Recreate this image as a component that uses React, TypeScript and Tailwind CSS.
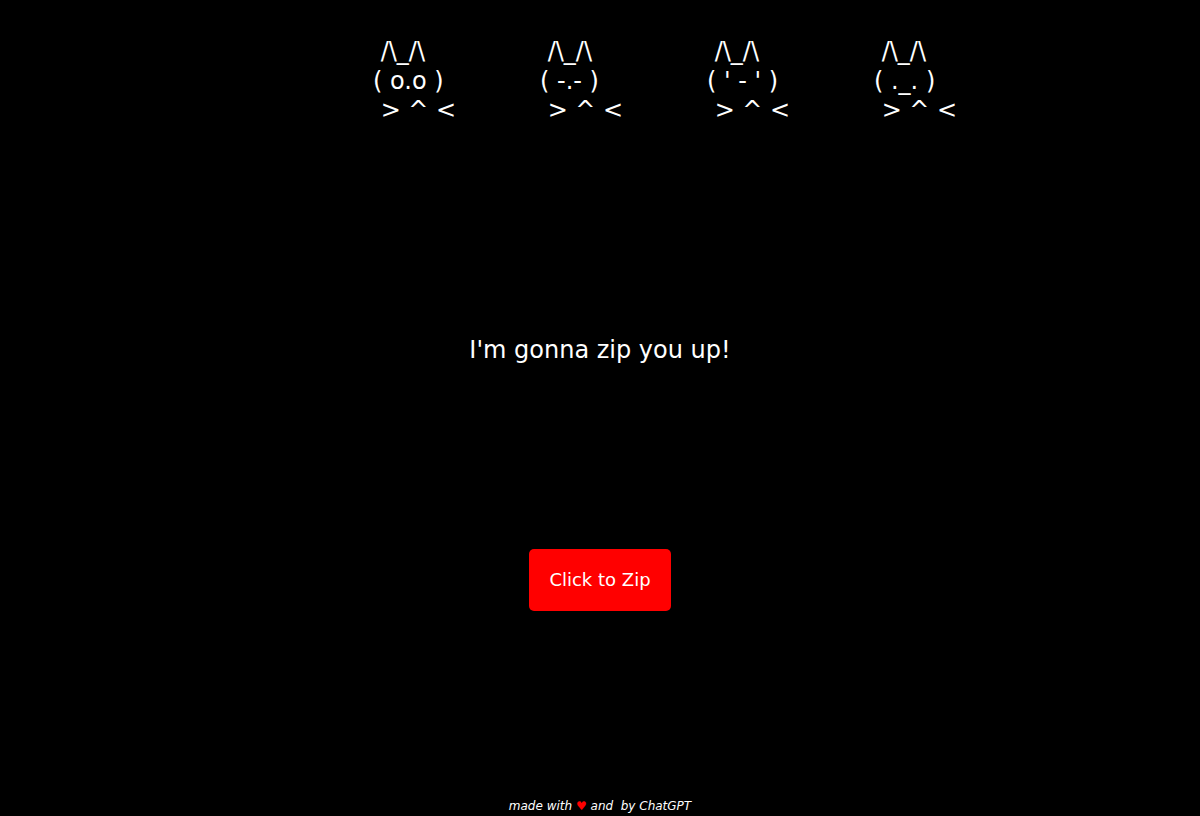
const cats = [
  " /\\_/\\\n( o.o )\n > ^ <",
  " /\\_/\\\n( -.- )\n > ^ <",
  " /\\_/\\\n( ' - ' )\n > ^ <",
  " /\\_/\\\n( ._. )\n > ^ <",
];

export default function App() {
  return (
    <div className="flex h-screen flex-col items-center bg-black text-white font-['DejaVu_Sans',sans-serif]">
      <div className="flex w-full justify-center pt-[37px] pl-[214px]">
        {cats.map((cat, i) => (
          <pre
            key={i}
            className="w-[167px] text-[24px] leading-[29.5px] font-['DejaVu_Sans',sans-serif]"
          >
            {cat}
          </pre>
        ))}
      </div>

      <p className="mt-[210px] text-[24px] leading-[28px]">I'm gonna zip you up!</p>

      <button className="mt-[185px] rounded-[5px] bg-[#ff0000] px-5 py-5 text-[18px] leading-[22px] text-white">
        Click to Zip
      </button>

      <footer className="mt-auto pb-[3px] text-[12px] italic leading-[14px]">
        made with <span className="text-[#ff0000]">♥</span> and&nbsp; by ChatGPT
      </footer>
    </div>
  );
}
